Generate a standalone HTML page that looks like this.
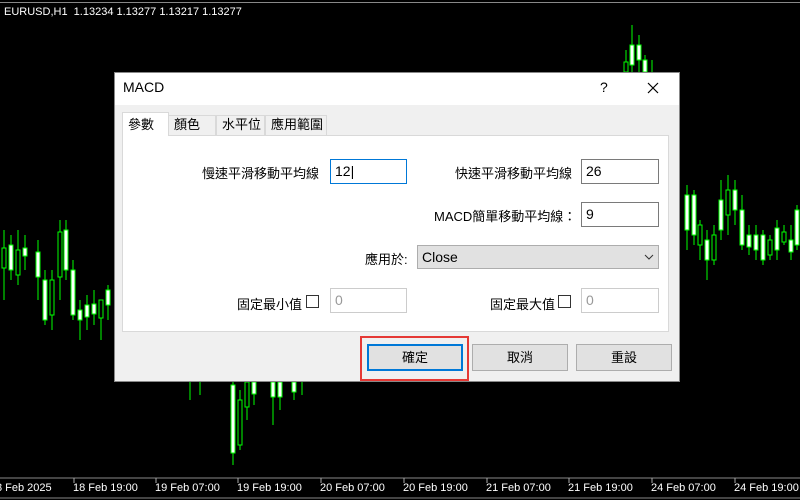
<!DOCTYPE html>
<html><head><meta charset="utf-8"><style>
*{margin:0;padding:0;box-sizing:border-box}
body{width:800px;height:500px;background:#000;position:relative;overflow:hidden;font-family:"Liberation Sans","Noto Sans CJK TC",sans-serif}
.a{position:absolute}
.lbl{font-size:13px;color:#000;white-space:nowrap}
.inp{position:absolute;background:#fff;border:1px solid #7a7a7a;font-size:14px;padding:2px 4px;height:25px;line-height:19px}
.btn{position:absolute;background:#e1e1e1;border:1px solid #adadad;font-size:13px;text-align:center;line-height:25px;height:27px}
.tab{position:absolute;top:115px;height:20px;background:#f0f0f0;border:1px solid #d9d9d9;border-bottom:none;font-size:13px;line-height:18px;padding-left:5px}
.cb{position:absolute;width:13px;height:13px;border:1px solid #333;background:#fff}
.ax{position:absolute;top:482px;font-size:11px;color:#fff;font-family:"Liberation Sans Narrow","Liberation Sans",sans-serif}
</style></head><body>
<div class="a" style="left:0;top:2px;width:800px;height:1px;background:#888"></div>
<div class="a" style="left:4px;top:6px;font-size:11px;color:#fff;font-family:'Liberation Sans Narrow','Liberation Sans',sans-serif">EURUSD,H1&nbsp; 1.13234 1.13277 1.13217 1.13277</div>
<svg class="a" style="left:0;top:0" width="800" height="500">
<g stroke="#00ff00" stroke-width="1" fill="#fff">
<line x1="4" y1="230" x2="4" y2="300"/><rect x="2" y="248" width="4" height="20" fill="#000"/>
<line x1="11" y1="235" x2="11" y2="280"/><rect x="9" y="245" width="4" height="25"/>
<line x1="18" y1="230" x2="18" y2="285"/><rect x="16" y="250" width="4" height="25" fill="#000"/>
<line x1="25" y1="235" x2="25" y2="270"/><rect x="23" y="248" width="4" height="8"/>
<line x1="38" y1="240" x2="38" y2="300"/><rect x="36" y="252" width="4" height="25"/>
<line x1="45" y1="270" x2="45" y2="325"/><rect x="43" y="280" width="4" height="40"/>
<line x1="52" y1="270" x2="52" y2="330"/><rect x="50" y="280" width="4" height="35" fill="#000"/>
<line x1="60" y1="220" x2="60" y2="300"/><rect x="58" y="232" width="4" height="45" fill="#000"/>
<line x1="66" y1="220" x2="66" y2="280"/><rect x="64" y="230" width="4" height="40"/>
<line x1="73" y1="260" x2="73" y2="320"/><rect x="71" y="270" width="4" height="45"/>
<line x1="80" y1="300" x2="80" y2="340"/><rect x="78" y="310" width="4" height="10"/>
<line x1="87" y1="295" x2="87" y2="330"/><rect x="85" y="305" width="4" height="12"/>
<line x1="94" y1="290" x2="94" y2="325"/><rect x="92" y="304" width="4" height="10"/>
<line x1="101" y1="300" x2="101" y2="340"/><rect x="99" y="300" width="4" height="18" fill="#000"/>
<line x1="108" y1="285" x2="108" y2="320"/><rect x="106" y="290" width="4" height="15"/>
<line x1="190" y1="380" x2="190" y2="400"/><line x1="200" y1="380" x2="200" y2="395"/>
<line x1="233" y1="380" x2="233" y2="465"/><rect x="231" y="385" width="4" height="68"/>
<line x1="240" y1="390" x2="240" y2="450"/><rect x="238" y="400" width="4" height="45" fill="#000"/>
<line x1="247" y1="380" x2="247" y2="420"/><rect x="245" y="382" width="4" height="25" fill="#000"/>
<line x1="254" y1="380" x2="254" y2="405"/><rect x="252" y="382" width="4" height="12"/>
<line x1="273" y1="380" x2="273" y2="425"/><rect x="271" y="382" width="4" height="15"/>
<line x1="280" y1="380" x2="280" y2="410"/><rect x="278" y="382" width="4" height="15"/>
<line x1="294" y1="380" x2="294" y2="400"/><rect x="292" y="382" width="4" height="10"/>
<line x1="302" y1="380" x2="302" y2="395"/>
<line x1="626" y1="50" x2="626" y2="72"/><rect x="624" y="62" width="4" height="10" fill="#000"/>
<line x1="632" y1="25" x2="632" y2="72"/><rect x="630" y="45" width="4" height="20"/>
<line x1="639" y1="35" x2="639" y2="72"/><rect x="637" y="45" width="4" height="15"/>
<line x1="645" y1="55" x2="645" y2="72"/><rect x="643" y="60" width="4" height="12"/>
<line x1="652" y1="60" x2="652" y2="72"/>
<line x1="687" y1="185" x2="687" y2="250"/><rect x="685" y="195" width="4" height="35"/>
<line x1="694" y1="190" x2="694" y2="245"/><rect x="692" y="195" width="4" height="40"/>
<line x1="700" y1="220" x2="700" y2="260"/><rect x="698" y="225" width="4" height="20" fill="#000"/>
<line x1="707" y1="230" x2="707" y2="280"/><rect x="705" y="240" width="4" height="20"/>
<line x1="714" y1="225" x2="714" y2="265"/><rect x="712" y="235" width="4" height="25" fill="#000"/>
<line x1="721" y1="180" x2="721" y2="240"/><rect x="719" y="200" width="4" height="30"/>
<line x1="728" y1="175" x2="728" y2="235"/><rect x="726" y="190" width="4" height="25" fill="#000"/>
<line x1="735" y1="180" x2="735" y2="225"/><rect x="733" y="190" width="4" height="20"/>
<line x1="742" y1="195" x2="742" y2="250"/><rect x="740" y="210" width="4" height="35"/>
<line x1="749" y1="225" x2="749" y2="255"/><rect x="747" y="235" width="4" height="12"/>
<line x1="756" y1="225" x2="756" y2="260"/><rect x="754" y="235" width="4" height="15"/>
<line x1="763" y1="230" x2="763" y2="265"/><rect x="761" y="235" width="4" height="25"/>
<line x1="770" y1="235" x2="770" y2="260"/><rect x="768" y="240" width="4" height="15" fill="#000"/>
<line x1="777" y1="220" x2="777" y2="260"/><rect x="775" y="228" width="4" height="22"/>
<line x1="784" y1="225" x2="784" y2="245"/><rect x="782" y="232" width="4" height="10" fill="#000"/>
<line x1="791" y1="225" x2="791" y2="260"/><rect x="789" y="240" width="4" height="12"/>
<line x1="797" y1="205" x2="797" y2="250"/><rect x="795" y="210" width="4" height="35"/>
</g>
<line x1="0" y1="478" x2="800" y2="478" stroke="#888"/>
<line x1="0" y1="498" x2="800" y2="498" stroke="#888"/>
<g stroke="#aaa"><line x1="74" y1="478" x2="74" y2="483"/><line x1="156" y1="478" x2="156" y2="483"/><line x1="238" y1="478" x2="238" y2="483"/><line x1="321" y1="478" x2="321" y2="483"/><line x1="404" y1="478" x2="404" y2="483"/><line x1="487" y1="478" x2="487" y2="483"/><line x1="569" y1="478" x2="569" y2="483"/><line x1="652" y1="478" x2="652" y2="483"/><line x1="735" y1="478" x2="735" y2="483"/></g>
</svg>
<div class="ax" style="left:-4px">8 Feb 2025</div>
<div class="ax" style="left:73px">18 Feb 19:00</div>
<div class="ax" style="left:155px">19 Feb 07:00</div>
<div class="ax" style="left:237px">19 Feb 19:00</div>
<div class="ax" style="left:320px">20 Feb 07:00</div>
<div class="ax" style="left:403px">20 Feb 19:00</div>
<div class="ax" style="left:486px">21 Feb 07:00</div>
<div class="ax" style="left:568px">21 Feb 19:00</div>
<div class="ax" style="left:651px">24 Feb 07:00</div>
<div class="ax" style="left:734px">24 Feb 19:00</div>

<div class="a" style="left:114px;top:72px;width:566px;height:310px;background:#f0f0f0;border:1px solid #888"></div>
<div class="a" style="left:115px;top:73px;width:564px;height:32px;background:#fff"></div>
<div class="a lbl" style="left:123px;top:79px;font-size:14px">MACD</div>
<div class="a lbl" style="left:600px;top:79px;font-size:14px">?</div>
<svg class="a" style="left:647px;top:82px" width="12" height="12"><path d="M1 1L11 11M11 1L1 11" stroke="#000" stroke-width="1.2"/></svg>

<div class="a" style="left:122px;top:135px;width:547px;height:197px;background:#fff;border:1px solid #d9d9d9"></div>
<div class="tab" style="left:168px;width:48px">顏色</div>
<div class="tab" style="left:216px;width:49px">水平位</div>
<div class="tab" style="left:265px;width:62px">應用範圍</div>
<div class="tab" style="left:122px;top:112px;width:47px;height:24px;background:#fff;padding-top:3px">參數</div>

<div class="a lbl" style="left:202px;top:163px">慢速平滑移動平均線</div>
<div class="inp" style="left:330px;top:159px;width:77px;border-color:#0078d7">12|</div>
<div class="a lbl" style="left:455px;top:163px">快速平滑移動平均線</div>
<div class="inp" style="left:581px;top:159px;width:78px">26</div>
<div class="a lbl" style="left:434px;top:206px">MACD簡單移動平均線：</div>
<div class="inp" style="left:581px;top:202px;width:78px">9</div>
<div class="a lbl" style="left:365px;top:249px">應用於:</div>
<div class="inp" style="left:417px;top:245px;width:242px;height:24px;background:#e1e1e1;border-color:#adadad">Close</div>
<svg class="a" style="left:644px;top:253px" width="10" height="8"><path d="M1 2L5 6L9 2" stroke="#333" fill="none"/></svg>
<div class="a lbl" style="left:237px;top:294px">固定最小值</div>
<div class="cb" style="left:306px;top:295px"></div>
<div class="inp" style="left:330px;top:288px;width:77px;border-color:#ccc;color:#999">0</div>
<div class="a lbl" style="left:490px;top:294px">固定最大值</div>
<div class="cb" style="left:558px;top:295px"></div>
<div class="inp" style="left:581px;top:288px;width:78px;border-color:#ccc;color:#999">0</div>

<div class="a" style="left:360px;top:336px;width:109px;height:45px;border:2px solid #e53935"></div>
<div class="btn" style="left:367px;top:344px;width:96px;border:2px solid #0078d7;line-height:23px">確定</div>
<div class="btn" style="left:472px;top:344px;width:96px">取消</div>
<div class="btn" style="left:576px;top:344px;width:96px">重設</div>
</body></html>
